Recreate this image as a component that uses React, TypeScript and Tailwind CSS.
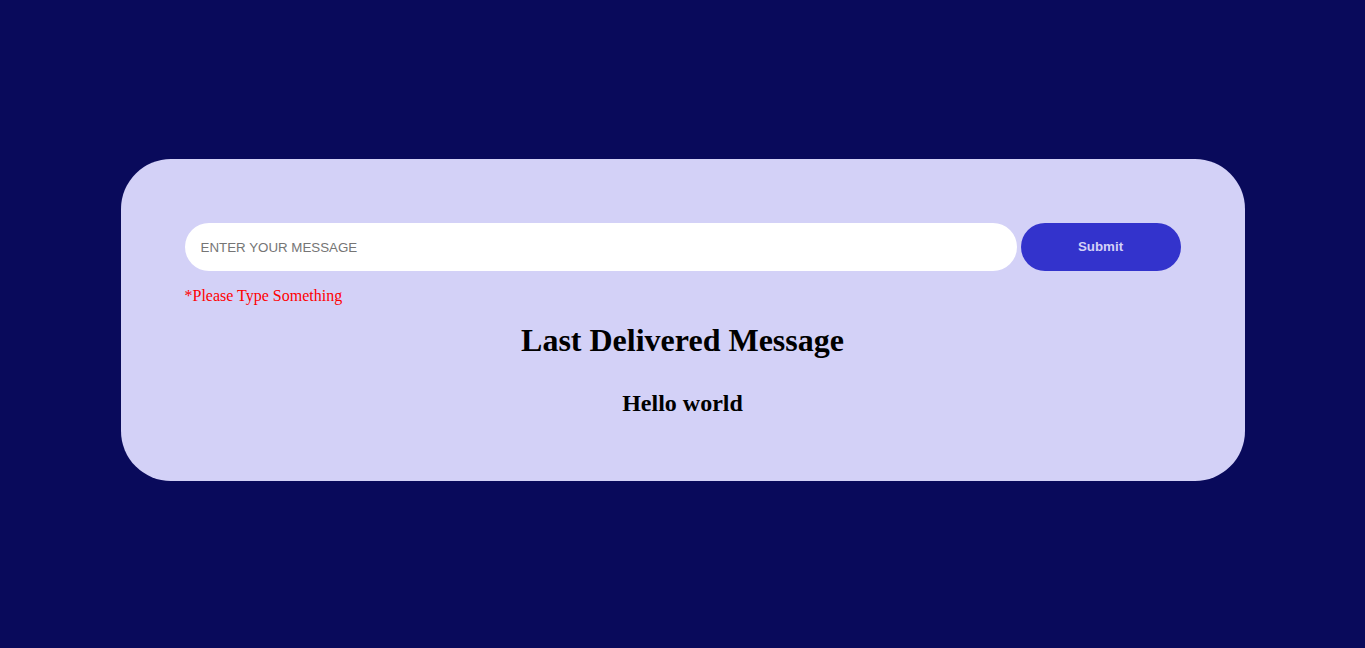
import React from "react";

export default function App() {
  return (
    <div className="min-h-screen w-full bg-[#090a5b] flex justify-center pt-[159px]">
      <div className="w-[1124px] h-[322px] rounded-[50px] bg-[#d3d1f7] px-16 pt-16">
        <div className="flex gap-1">
          <input
            className="h-12 w-[832px] rounded-full bg-white px-4 text-[13.333px] text-gray-700 placeholder:text-[#757575] outline-none font-['Liberation_Sans',Arial,sans-serif]"
            placeholder="ENTER YOUR MESSAGE"
          />
          <button className="h-12 w-40 rounded-full bg-[#3333cc] text-[13.333px] font-bold text-[#d3d1f7] font-['Liberation_Sans',Arial,sans-serif]">
            Submit
          </button>
        </div>
        <p className="mt-4 text-[16px] leading-[18px] text-[#ff0000] font-['Liberation_Serif','Times_New_Roman',serif]">
          *Please Type Something
        </p>
        <h1 className="mt-[17px] text-center text-[32px] font-bold leading-[37px] text-black font-['Liberation_Serif','Times_New_Roman',serif]">
          Last Delivered Message
        </h1>
        <h2 className="mt-[30px] text-center text-[24px] font-bold leading-[28px] text-black font-['Liberation_Serif','Times_New_Roman',serif]">
          Hello world
        </h2>
      </div>
    </div>
  );
}
